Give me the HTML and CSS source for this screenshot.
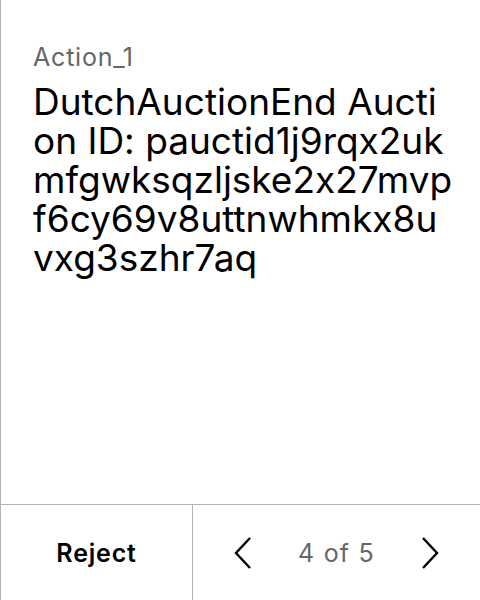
FILE: index.html
```html
<!DOCTYPE html>
<html>
<head>
<meta charset="utf-8">
<link rel="stylesheet" href="styles.css">
</head>
<body>
<div class="screen">
  <div class="content">
    <div class="label">Action_1</div>
    <div class="message">DutchAuctionEnd Auction ID: pauctid1j9rqx2ukmfgwksqzljske2x27mvpf6cy69v8uttnwhmkx8uvxg3szhr7aq</div>
  </div>
  <div class="footer">
    <div class="reject">Reject</div>
    <div class="pager">
      <svg class="chev" width="20" height="32" viewBox="0 0 20 32"><path d="M17 1 L3 16 L17 31" fill="none" stroke="#000" stroke-width="2.4"/></svg>
      <span class="count">4 of 5</span>
      <svg class="chev" width="20" height="32" viewBox="0 0 20 32"><path d="M3 1 L17 16 L3 31" fill="none" stroke="#000" stroke-width="2.4"/></svg>
    </div>
  </div>
</div>
</body>
</html>
```
FILE: styles.css
```css
html, body { margin: 0; padding: 0; background: #fff; }
body { font-family: Inter, "Noto Sans", sans-serif; font-feature-settings: "calt" 0; }
.screen {
  width: 480px; height: 600px; box-sizing: border-box;
  border-left: 1px solid #b3b3b3;
  display: flex; flex-direction: column;
}
.content { flex: 1; padding: 41px 26px 0 32px; }
.label { font-size: 25px; color: #666; line-height: 32px; letter-spacing: 0.8px; }
.message { font-size: 37px; line-height: 39px; color: #000; word-break: break-all; margin-top: 9px; }
.footer { height: 95px; border-top: 1px solid #b3b3b3; display: flex; }
.reject { width: 191px; border-right: 1px solid #b3b3b3; display: flex; align-items: center; justify-content: center; font-size: 25px; font-weight: 600; color: #000; letter-spacing: 0.8px; }
.pager { flex: 1; display: flex; align-items: center; justify-content: space-between; padding: 0 40px; }
.count { font-size: 25px; color: #666; letter-spacing: 1.2px; }
.chev { display: block; }
```
